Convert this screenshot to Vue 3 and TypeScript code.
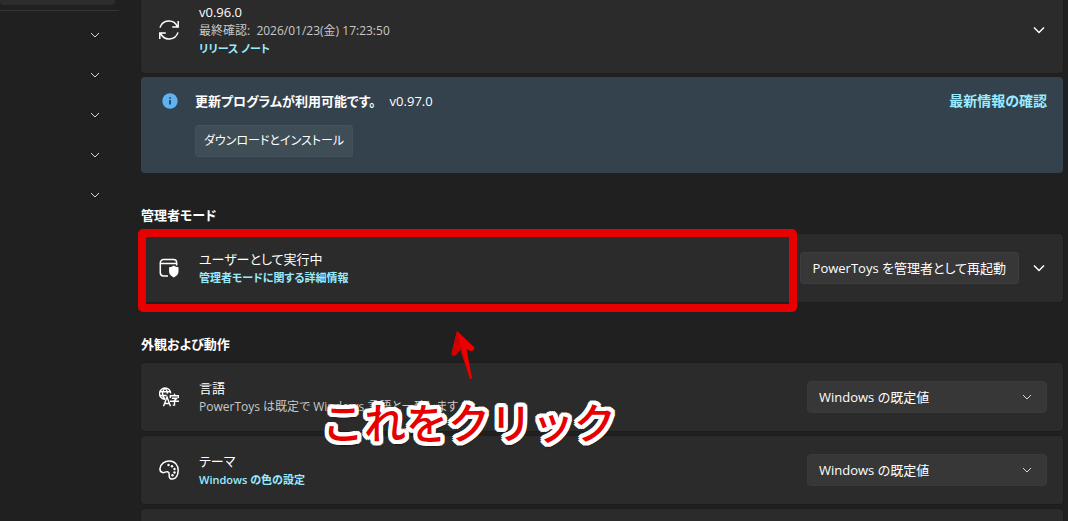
<script setup lang="ts">
import { ref } from 'vue'

const navGroups = ['グループ 1', 'グループ 2', 'グループ 3', 'グループ 4', 'グループ 5']
const defaultOption = 'Windows の既定値'
const language = ref(defaultOption)
const theme = ref(defaultOption)
</script>

<template>
  <div class="page">
    <nav class="sidebar">
      <div class="nav-current"></div>
      <hr class="nav-line" />
      <button v-for="group in navGroups" :key="group" type="button" class="nav-group" :aria-label="group">
        <svg class="chevron-small" viewBox="0 0 10 10"><path d="M1 3l4 4 4-4" /></svg>
      </button>
    </nav>

    <main class="content">
      <section class="card card-version">
        <svg class="icon" viewBox="0 0 20 20">
          <path d="M1 7.6A9.3 9.3 0 0 1 18.4 6.6M19.2 1v6h-6M19 12.4A9.3 9.3 0 0 1 1.6 13.4M.8 19v-6h6" />
        </svg>
        <div class="text">
          <span class="title">v0.96.0</span>
          <span class="note">最終確認:&nbsp; 2026/01/23(金) 17:23:50</span>
          <a class="link" href="#release">リリース ノート</a>
        </div>
        <button type="button" class="expander" aria-label="詳細を表示">
          <svg class="chevron" viewBox="0 0 16 16"><path d="M3 5.5l5 5 5-5" /></svg>
        </button>
      </section>

      <section class="banner">
        <svg class="info" viewBox="0 0 16 16">
          <circle cx="8" cy="8" r="7.7" />
          <path d="M7.3 7h1.4v4.5H7.3zM7.3 4.3h1.4v1.4H7.3z" />
        </svg>
        <div class="banner-body">
          <p class="banner-line"><strong>更新プログラムが利用可能です。</strong><span>v0.97.0</span></p>
          <button type="button" class="btn btn-download">ダウンロードとインストール</button>
        </div>
        <a class="check" href="#check">最新情報の確認</a>
      </section>

      <h2 class="heading">管理者モード</h2>
      <section class="card">
        <svg class="icon" viewBox="0 0 20 20">
          <path d="M9 18H4.5A3.2 3.2 0 0 1 1.3 14.8V4.7A3.2 3.2 0 0 1 4.5 1.5H14.5A3.2 3.2 0 0 1 17.7 4.7V7.5M1.3 5.5H17.7" />
          <path class="solid" d="M14.8 7.5c1.5 1.2 2.7 1.6 4.7 1.7v4.3c0 2.7-1.9 4.6-4.7 5.9-2.8-1.3-4.7-3.2-4.7-5.9V9.2c2-.1 3.2-.5 4.7-1.7z" />
        </svg>
        <div class="text">
          <span class="title">ユーザーとして実行中</span>
          <a class="link" href="#admin">管理者モードに関する詳細情報</a>
        </div>
        <button type="button" class="btn">PowerToys を管理者として再起動</button>
        <button type="button" class="expander" aria-label="詳細を表示">
          <svg class="chevron" viewBox="0 0 16 16"><path d="M3 5.5l5 5 5-5" /></svg>
        </button>
        <div class="highlight"></div>
      </section>

      <h2 class="heading">外観および動作</h2>
      <div class="stack">
        <section class="card">
          <svg class="icon" viewBox="0 0 20 20">
            <path class="fine" d="M6 12.2A5.6 5.6 0 1 1 11.7 6.5M.7 4.7h10.6M.7 8.5h6.8M6 .9C2.7 4 2.7 9 6 12.2M6 .9c1.7 1.6 2.5 3.6 2.4 5.8" />
            <path class="fine" d="M4.5 19.3L8 10l3.5 9.3M5.7 16.5h4.6" />
            <path class="fine" d="M15.5 6.8v1.8M11.3 11V8.7h8.2V11M12.8 11.2h5l-2.3 2.2v4.7h-1.8M11 14.3h9" />
          </svg>
          <div class="text">
            <label class="title" for="language">言語</label>
            <span class="note">PowerToys は既定で Windows 言語と一致します</span>
          </div>
          <div class="picker">
            <select id="language" v-model="language"><option>{{ defaultOption }}</option></select>
            <svg class="chevron-small" viewBox="0 0 10 10"><path d="M1 3l4 4 4-4" /></svg>
          </div>
          <div class="callout">
            <svg class="arrow" viewBox="0 0 26 50">
              <path d="M7 1L24.5 17.5Q24 21.5 20.5 21L16.5 19 22 48.5 20 49 10.5 19.5 6 25Q2 27 1.5 23.5z" />
              <path class="facet" d="M7 1L20 49 10.5 19.5 6 25Q2 27 1.5 23.5z" />
            </svg>
            <span class="caption">これをクリック</span>
          </div>
        </section>
        <section class="card">
          <svg class="icon" viewBox="0 0 20 20">
            <path d="M1 8.5C1.5 3.5 6 .8 10.5 .9 16 1 19.3 5.5 19.2 10.5 19.1 15.5 16.7 19 13.5 19.1 11.3 19.2 10 17.7 10.2 15.5 10.4 13.5 10.2 12.3 8.7 11.8 7 11.2 5.5 13 3.7 12.6 1.6 12.1.8 10.5 1 8.5z" />
            <g class="solid">
              <circle cx="9.5" cy="5" r="1.2" /><circle cx="13" cy="6.3" r="1.2" /><circle cx="15.5" cy="9" r="1.2" />
              <circle cx="15.5" cy="12.5" r="1.2" /><circle cx="13.5" cy="15.2" r="1.2" />
            </g>
          </svg>
          <div class="text">
            <label class="title" for="theme">テーマ</label>
            <a class="link" href="#colors">Windows の色の設定</a>
          </div>
          <div class="picker">
            <select id="theme" v-model="theme"><option>{{ defaultOption }}</option></select>
            <svg class="chevron-small" viewBox="0 0 10 10"><path d="M1 3l4 4 4-4" /></svg>
          </div>
        </section>
        <section class="card"></section>
      </div>
    </main>
  </div>
</template>

<style>
body {
  margin: 0;
  background: #202020;
}
</style>

<style scoped>
.page {
  display: flex;
  height: 100vh;
  overflow: hidden;
  background: #202020;
  color: #fff;
  font-family: "Open Sans", "Noto Sans CJK JP", sans-serif;
  font-size: 13px;
  line-height: 20px;
  font-feature-settings: "palt";
}
.page * {
  box-sizing: border-box;
}
button,
select {
  font: inherit;
  font-feature-settings: inherit;
  color: inherit;
}
svg {
  flex: none;
  fill: none;
  stroke: currentColor;
}
.sidebar {
  flex: none;
  width: 119px;
}
.nav-current {
  height: 5px;
  margin-right: 4px;
  border-radius: 0 0 4px 4px;
  background: #2d2d2d;
}
.nav-line {
  margin: 5px 0 4px;
  border: 0;
  border-top: 1px solid #353535;
}
.nav-group {
  display: flex;
  align-items: center;
  justify-content: flex-end;
  width: 100%;
  height: 40px;
  padding: 0 19px 0 0;
  border: 0;
  background: none;
}
.chevron-small {
  width: 10px;
  height: 10px;
  color: #d8d8d8;
}
.content {
  flex: 1;
  min-width: 0;
  padding: 0 5px 0 22px;
}
.card {
  position: relative;
  display: flex;
  align-items: center;
  min-height: 68px;
  padding: 0 16px 0 18px;
  border-radius: 4px;
  background: #2b2b2b;
  box-shadow: 0 0 0 1px #1d1d1d;
}
.card-version {
  min-height: 86px;
  margin-top: -13px;
}
.icon {
  width: 20px;
  height: 20px;
  stroke-width: 1.5;
}
.solid {
  fill: currentColor;
  stroke: none;
}
.fine {
  stroke-width: 1.4;
}
.text {
  display: flex;
  flex: 1;
  flex-direction: column;
  align-items: flex-start;
  margin-left: 20px;
}
.note,
.link {
  line-height: 18px;
}
.note {
  color: #c8c8c8;
  font-size: 12px;
}
.link {
  font-size: 11px;
}
.link,
.check {
  color: #99ebff;
  font-weight: 600;
  text-decoration: none;
}
.check {
  font-size: 14px;
}
.expander {
  display: flex;
  margin-left: 12px;
  padding: 0;
  border: 0;
  background: none;
}
.chevron {
  width: 16px;
  height: 16px;
  stroke-width: 1.5;
}
.btn {
  height: 32px;
  padding: 0 12px;
  border: 1px solid rgba(255, 255, 255, 0.03);
  border-radius: 4px;
  background: rgba(255, 255, 255, 0.06);
}
.btn-download {
  padding: 0 8px;
  font-size: 12px;
}
.banner {
  display: flex;
  align-items: flex-start;
  margin-top: 4px;
  padding: 14px 16px 16px 21px;
  border-radius: 4px;
  background: #34424d;
}
.info {
  width: 16px;
  height: 16px;
  margin-top: 2px;
  fill: #60b3f3;
  stroke: none;
}
.info path {
  fill: #17242e;
}
.banner-body {
  flex: 1;
  margin-left: 17px;
}
.banner-line {
  display: flex;
  gap: 14px;
  margin: 0 0 14px;
}
.banner-line strong,
.heading {
  font-weight: 600;
}
.heading {
  margin: 32px 0 9px;
  font-size: 13px;
  line-height: 20px;
}
.stack {
  display: grid;
  gap: 5px;
}
.picker {
  position: relative;
  width: 240px;
}
.picker select {
  display: block;
  width: 100%;
  height: 32px;
  padding: 0 32px 0 11px;
  border: 1px solid #3a3a3a;
  border-radius: 4px;
  background: #373737;
  appearance: none;
}
.picker svg {
  position: absolute;
  top: 11px;
  right: 15px;
  pointer-events: none;
}
.highlight {
  position: absolute;
  inset: -5px 266px -10px -3px;
  border: 8px solid #e60000;
  border-radius: 5px;
  pointer-events: none;
}
.callout {
  position: absolute;
  z-index: 1;
  top: -33px;
  left: 181px;
  display: flex;
  flex-direction: column;
  pointer-events: none;
}
.arrow {
  width: 26px;
  height: 50px;
  margin-left: 128px;
  fill: #ee0000;
  stroke: none;
}
.arrow .facet {
  fill: #d00000;
}
.caption {
  margin-top: 11px;
  color: #e60000;
  font-family: "Noto Sans CJK JP", sans-serif;
  font-feature-settings: normal;
  font-size: 42px;
  font-weight: 500;
  line-height: 60px;
  white-space: nowrap;
  text-shadow:
    4px 0 #fff, -4px 0 #fff, 0 4px #fff, 0 -4px #fff,
    3px 3px #fff, -3px 3px #fff, 3px -3px #fff, -3px -3px #fff,
    4px 2px #fff, -4px 2px #fff, 4px -2px #fff, -4px -2px #fff,
    2px 4px #fff, -2px 4px #fff, 2px -4px #fff, -2px -4px #fff,
    2px 0 #fff, -2px 0 #fff, 0 2px #fff, 0 -2px #fff,
    1px 5px 2px rgba(0, 0, 0, 0.5);
}
</style>
